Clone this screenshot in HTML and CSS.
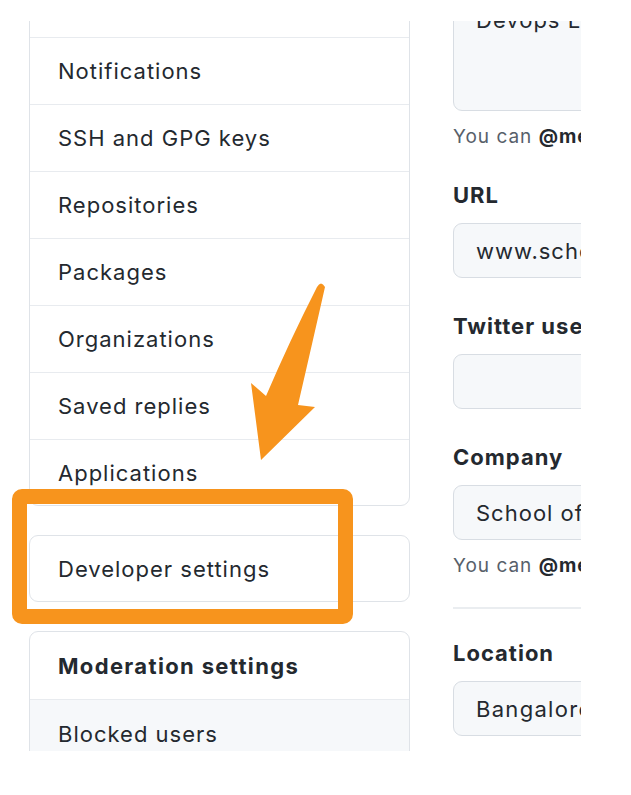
FILE: index.html
```html
<!DOCTYPE html>
<html lang="en">
<head>
<meta charset="utf-8">
<title>Settings</title>
<link rel="stylesheet" href="styles.css">
</head>
<body>
<div class="shot">
  <div class="layout">
    <nav class="side">
      <div class="box box-main">
        <div class="row row-spacer"></div>
        <div class="row">Notifications</div>
        <div class="row">SSH and GPG keys</div>
        <div class="row">Repositories</div>
        <div class="row">Packages</div>
        <div class="row">Organizations</div>
        <div class="row">Saved replies</div>
        <div class="row row-last">Applications</div>
      </div>
      <div class="box box-dev">
        <div class="row row-single">Developer settings</div>
      </div>
      <div class="box box-mod">
        <div class="row row-head">Moderation settings</div>
        <div class="row row-gray">Blocked users</div>
      </div>
    </nav>
    <main class="form">
      <div class="textarea">Devops Lead</div>
      <p class="note note-first">You can <b>@mention</b> other users and organizations to link to them.</p>
      <label class="label label-url">URL</label>
      <div class="input">www.schoolofdevops.com</div>
      <label class="label label-gap">Twitter username</label>
      <div class="input"></div>
      <label class="label label-gap">Company</label>
      <div class="input">School of Devops</div>
      <p class="note note-after">You can <b>@mention</b> your company's GitHub organization to link it.</p>
      <hr class="divider">
      <label class="label label-loc">Location</label>
      <div class="input input-wide">Bangalore</div>
    </main>
  </div>
</div>
<div class="highlight"></div>
<svg class="arrow" width="631" height="795" viewBox="0 0 631 795" xmlns="http://www.w3.org/2000/svg">
  <path d="M317 287 Q321 280 325 287 Q313 340 298 405 L315 407 L261 460 L251 383 L266 396 Q290 340 317 287 Z" fill="#f7941d"/>
</svg>
</body>
</html>
```
FILE: styles.css
```css
* { box-sizing: border-box; }
html, body { margin: 0; padding: 0; background: #ffffff; }
body {
  font-family: "Inter", "Noto Sans", "Liberation Sans", sans-serif;
  color: #24292f;
  width: 631px;
  height: 795px;
  position: relative;
  overflow: hidden;
}
.shot {
  margin-top: 21px;
  width: 581px;
  height: 730px;
  overflow: hidden;
}
.layout {
  display: flex;
  gap: 43px;
  padding-left: 29px;
}
.side {
  width: 381px;
  flex: none;
  display: flex;
  flex-direction: column;
}
.box {
  border: 1px solid #dfe3e8;
  border-radius: 9px;
  background: #fff;
  overflow: hidden;
}
.box-main { margin-top: -30px; }
.box-dev { margin-top: 29px; }
.box-mod { margin-top: 29px; }
.row {
  height: 67px;
  border-bottom: 1px solid #e8ebef;
  padding-left: 28px;
  display: flex;
  align-items: center;
  font-size: 22px;
  letter-spacing: 1px;
  color: #24292f;
  white-space: nowrap;
}
.row-spacer { height: 46px; }
.row-last { height: 65px; border-bottom: none; }
.row-single { height: 65px; border-bottom: none; }
.row-head { font-weight: 700; height: 68px; letter-spacing: 1.35px; }
.row-gray { background: #f6f8fa; border-bottom: none; height: 67px; }

.form {
  flex: none;
  width: 400px;
  display: flex;
  flex-direction: column;
}
.textarea {
  margin-top: -31px;
  height: 121px;
  border: 1px solid #d8dde3;
  border-radius: 9px;
  background: #f6f8fa;
  padding: 14px 22px;
  font-size: 22px;
  line-height: 30px;
  letter-spacing: 1px;
  white-space: nowrap;
}
.note {
  margin: 13px 0 0;
  font-size: 19px;
  line-height: 26px;
  letter-spacing: 1px;
  color: #57606a;
  white-space: nowrap;
}
.note b { color: #24292f; font-weight: 700; }
.note-after { margin-top: 13px; }
.label {
  display: block;
  font-size: 22px;
  line-height: 30px;
  font-weight: 700;
  letter-spacing: 1px;
  white-space: nowrap;
}
.label-url { margin-top: 30px; }
.label-gap { margin-top: 33px; }
.label-loc { margin-top: 29px; }
.input {
  margin-top: 13px;
  height: 55px;
  border: 1px solid #d8dde3;
  border-radius: 9px;
  background: #f6f8fa;
  padding-left: 22px;
  display: flex;
  align-items: center;
  font-size: 22px;
  letter-spacing: 1px;
  white-space: nowrap;
}
.input-wide { letter-spacing: 1.3px; }
.divider {
  margin: 28px 0 0;
  border: none;
  height: 2px;
  background: #eaedf0;
}
.highlight {
  position: absolute;
  left: 12px;
  top: 489px;
  width: 341px;
  height: 135px;
  border: 15px solid #f7941d;
  border-radius: 10px;
}
.arrow {
  position: absolute;
  left: 0;
  top: 0;
}
```
